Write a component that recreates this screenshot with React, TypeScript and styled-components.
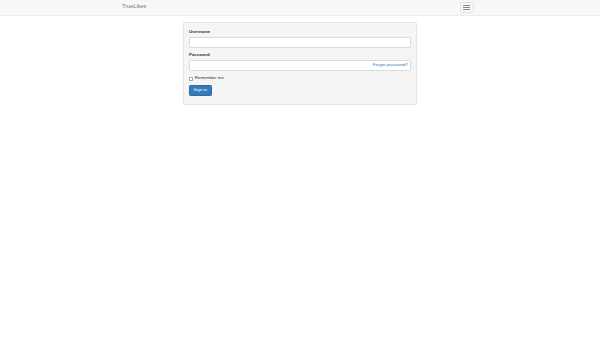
import React from 'react';
import styled, { createGlobalStyle } from 'styled-components';

// Bootstrap 3 look, scaled down to ~0.3125 of a 1920px page
const GlobalStyle = createGlobalStyle`
  html, body {
    margin: 0;
    padding: 0;
    background: #fff;
  }
  body {
    font-family: "Liberation Sans", Arial, sans-serif;
    font-size: 4.4px;
    line-height: 1.43;
    color: #333;
  }
  * { box-sizing: border-box; }
`;

const Navbar = styled.nav`
  height: 15.6px;
  background: #f8f8f8;
  border-bottom: 1px solid #ececec;
`;

const NavInner = styled.div`
  width: 366px;
  margin: 0 auto;
  height: 100%;
  display: flex;
  align-items: center;
  justify-content: space-between;
  padding: 0 9.5px 0 5px;
`;

const Brand = styled.a`
  font-size: 5.6px;
  color: #777;
  text-decoration: none;
  margin-top: -0.5px;
`;

const Toggle = styled.button`
  width: 13.8px;
  height: 10.6px;
  padding: 0;
  border: 1px solid #e2e2e2;
  border-radius: 1.3px;
  background: transparent;
  display: flex;
  flex-direction: column;
  align-items: center;
  justify-content: center;
  gap: 1.2px;
`;

const IconBar = styled.span`
  display: block;
  width: 6.9px;
  height: 0.6px;
  background: #888;
  border-radius: 0.3px;
`;

const Main = styled.main`
  display: flex;
  justify-content: center;
  padding-top: 6.5px;
`;

const Well = styled.form`
  width: 234px;
  padding: 6px 5px 8px;
  background: #f5f5f5;
  border: 1px solid #e6e6e6;
  border-radius: 1.3px;
`;

const FormGroup = styled.div`
  margin-bottom: 4.7px;
`;

const Label = styled.label`
  display: block;
  font-weight: 700;
  margin-bottom: 1.6px;
`;

const InputWrap = styled.div`
  position: relative;
`;

const Input = styled.input`
  display: block;
  width: 100%;
  height: 10.6px;
  padding: 0 3.8px;
  font: inherit;
  background: #fff;
  border: 1px solid #dadada;
  border-radius: 1.3px;
  outline: none;
`;

const ForgotLink = styled.a`
  position: absolute;
  right: 3px;
  top: 50%;
  transform: translateY(-42%);
  color: #337ab7;
  font-size: 4.4px;
  text-decoration: none;
`;

const CheckRow = styled.label`
  display: flex;
  align-items: center;
  gap: 1.8px;
  margin: 2.2px 0 3.3px;
  color: #333;
`;

const Box = styled.span`
  width: 4px;
  height: 4px;
  border: 1px solid #a8a8a8;
  border-radius: 0.6px;
  background: #fff;
`;

const Button = styled.button`
  display: inline-block;
  height: 10.6px;
  padding: 0 3.6px;
  font: inherit;
  color: #fff;
  background: #337ab7;
  border: 1px solid #2e6da4;
  border-radius: 1.3px;
`;

export default function App() {
  return (
    <>
      <GlobalStyle />
      <Navbar>
        <NavInner>
          <Brand href="#">TrueLikes</Brand>
          <Toggle type="button" aria-label="Toggle navigation">
            <IconBar />
            <IconBar />
            <IconBar />
          </Toggle>
        </NavInner>
      </Navbar>
      <Main>
        <Well onSubmit={(e) => e.preventDefault()}>
          <FormGroup>
            <Label htmlFor="username">Username</Label>
            <Input id="username" type="text" />
          </FormGroup>
          <FormGroup>
            <Label htmlFor="password">Password</Label>
            <InputWrap>
              <Input id="password" type="password" />
              <ForgotLink href="#">Forgot password?</ForgotLink>
            </InputWrap>
          </FormGroup>
          <CheckRow>
            <Box />
            Remember me
          </CheckRow>
          <Button type="submit">Sign in</Button>
        </Well>
      </Main>
    </>
  );
}
